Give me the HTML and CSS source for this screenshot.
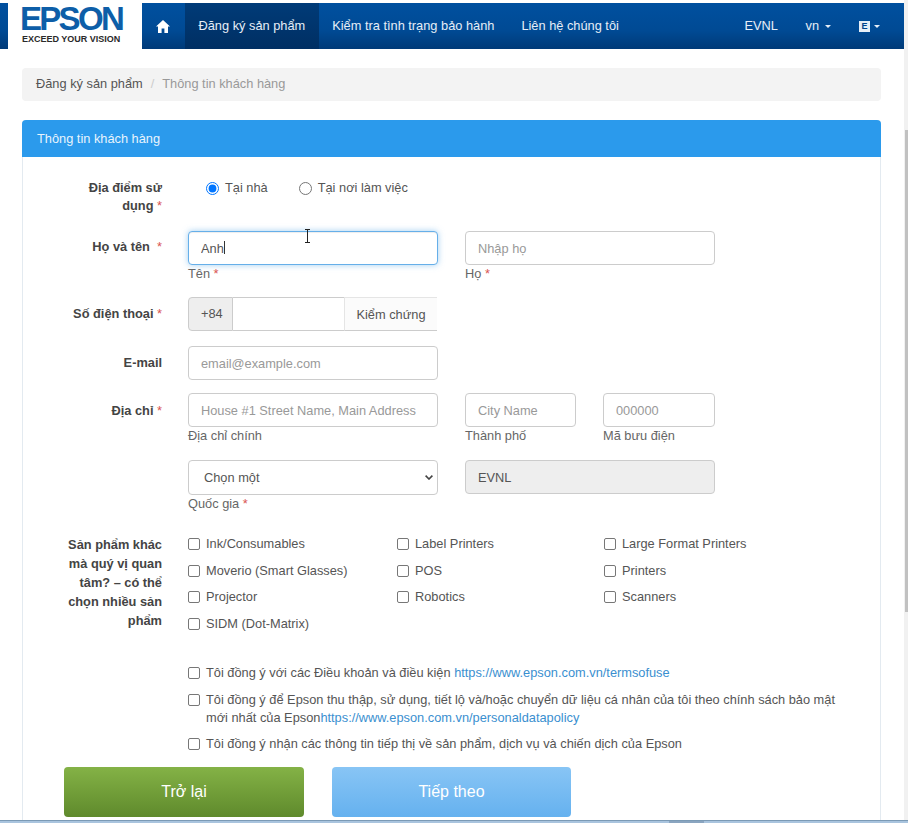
FILE: index.html
```html
<!DOCTYPE html>
<html lang="en">
<head>
    <meta charset="UTF-8">
    <meta name="viewport" content="width=device-width, initial-scale=1.0">
    <title>Thông tin khách hàng</title>
    <link rel="stylesheet" href="styles.css">
</head>
<body>
    <div class="page">
        <nav class="navbar">
            <a class="brand" href="#">
                <span class="brand-name">EPSON</span>
                <span class="brand-tag">EXCEED YOUR VISION</span>
            </a>
            <a class="nav-item nav-home" href="#">
                <svg width="14" height="13" viewBox="0 0 14 13"><path fill="#fff" d="M7 0 0 6.6h2V13h3.6V8.4h2.8V13H12V6.6h2z"/></svg>
            </a>
            <a class="nav-item active" href="#">Đăng ký sản phẩm</a>
            <a class="nav-item" href="#">Kiểm tra tình trạng bảo hành</a>
            <a class="nav-item" href="#">Liên hệ chúng tôi</a>
            <a class="nav-item nav-right" href="#">EVNL</a>
            <a class="nav-item nav-lang" href="#">vn <span class="caret"></span></a>
            <a class="nav-item nav-user" href="#">
                <span class="user-box">E</span><span class="caret"></span>
            </a>
        </nav>

        <div class="content">
            <ol class="breadcrumb">
                <li><a href="#">Đăng ký sản phẩm</a></li>
                <li class="sep">/</li>
                <li class="current">Thông tin khách hàng</li>
            </ol>

            <section class="panel">
                <h2 class="panel-heading">Thông tin khách hàng</h2>
                <form class="panel-body">
                    <div class="row row-place">
                        <label class="row-label">Địa điểm sử dụng <span class="req">*</span></label>
                        <div class="radios">
                            <label class="radio"><input type="radio" name="place" checked> Tại nhà</label>
                            <label class="radio"><input type="radio" name="place"> Tại nơi làm việc</label>
                        </div>
                    </div>

                    <div class="row row-name">
                        <label class="row-label">Họ và tên &nbsp;<span class="req">*</span></label>
                        <div class="field w-250">
                            <input class="input focused" type="text" value="Anh">
                            <small>Tên <span class="req">*</span></small>
                        </div>
                        <div class="field w-250">
                            <input class="input" type="text" placeholder="Nhập họ">
                            <small>Họ <span class="req">*</span></small>
                        </div>
                    </div>

                    <div class="row row-phone">
                        <label class="row-label">Số điện thoại <span class="req">*</span></label>
                        <div class="input-group">
                            <span class="addon">+84</span>
                            <input class="group-input" type="text">
                            <button class="verify" type="button">Kiểm chứng</button>
                        </div>
                    </div>

                    <div class="row row-email">
                        <label class="row-label">E-mail</label>
                        <div class="field w-250">
                            <input class="input" type="text" placeholder="email@example.com">
                        </div>
                    </div>

                    <div class="row row-address">
                        <label class="row-label">Địa chỉ <span class="req">*</span></label>
                        <div class="field w-250">
                            <input class="input" type="text" placeholder="House #1 Street Name, Main Address">
                            <small>Địa chỉ chính</small>
                        </div>
                        <div class="field w-111">
                            <input class="input" type="text" placeholder="City Name">
                            <small>Thành phố</small>
                        </div>
                        <div class="field w-112">
                            <input class="input" type="text" placeholder="000000">
                            <small>Mã bưu điện</small>
                        </div>
                    </div>

                    <div class="row row-country">
                        <span class="row-label"></span>
                        <div class="field w-250">
                            <div class="select-wrap">
                                <select class="input select">
                                    <option>Chọn một</option>
                                </select>
                                <svg class="select-arrow" width="8" height="5" viewBox="0 0 8 5"><path fill="none" stroke="#444" stroke-width="1.6" d="M.6.6 4 4 7.4.6"/></svg>
                            </div>
                            <small>Quốc gia <span class="req">*</span></small>
                        </div>
                        <div class="field w-250">
                            <input class="input" type="text" value="EVNL" disabled>
                        </div>
                    </div>

                    <div class="row row-products">
                        <label class="row-label">Sản phẩm khác mà quý vị quan tâm? – có thể chọn nhiều sản phẩm</label>
                        <div class="products">
                            <label class="check"><input type="checkbox"> Ink/Consumables</label>
                            <label class="check"><input type="checkbox"> Label Printers</label>
                            <label class="check"><input type="checkbox"> Large Format Printers</label>
                            <label class="check"><input type="checkbox"> Moverio (Smart Glasses)</label>
                            <label class="check"><input type="checkbox"> POS</label>
                            <label class="check"><input type="checkbox"> Printers</label>
                            <label class="check"><input type="checkbox"> Projector</label>
                            <label class="check"><input type="checkbox"> Robotics</label>
                            <label class="check"><input type="checkbox"> Scanners</label>
                            <label class="check"><input type="checkbox"> SIDM (Dot-Matrix)</label>
                        </div>
                    </div>

                    <div class="agreements">
                        <label class="agree"><input type="checkbox"><span>Tôi đồng ý với các Điều khoản và điều kiện <a href="#">https://www.epson.com.vn/termsofuse</a></span></label>
                        <label class="agree"><input type="checkbox"><span>Tôi đồng ý để Epson thu thập, sử dụng, tiết lộ và/hoặc chuyển dữ liệu cá nhân của tôi theo chính sách bảo mật mới nhất của Epson<a href="#">https://www.epson.com.vn/personaldatapolicy</a></span></label>
                        <label class="agree"><input type="checkbox"><span>Tôi đồng ý nhận các thông tin tiếp thị về sản phẩm, dịch vụ và chiến dịch của Epson</span></label>
                    </div>

                    <div class="actions">
                        <button class="btn btn-back" type="button">Trở lại</button>
                        <button class="btn btn-next" type="button">Tiếp theo</button>
                    </div>
                </form>
            </section>
        </div>

        <div class="scrollbar"><div class="scroll-thumb"></div></div>
        <div class="bottom-strip"><div class="strip-thumb"></div></div>
        <span class="text-caret"></span>
        <span class="ibeam"></span>
    </div>
</body>
</html>
```

FILE: styles.css
```css
* {
    box-sizing: border-box;
}

html, body {
    margin: 0;
    padding: 0;
    height: 100%;
    overflow: hidden;
}

body {
    font-family: "Liberation Sans", Arial, sans-serif;
    font-size: 12.8px;
    line-height: 18px;
    color: #555;
    background-color: #fff;
}

a {
    text-decoration: none;
}

.page {
    position: relative;
    width: 908px;
    height: 823px;
    padding-top: 3px;
    overflow: hidden;
}

/* top bar */
.navbar {
    display: flex;
    align-items: stretch;
    width: 904px;
    height: 46px;
    padding-left: 8px;
    background: linear-gradient(to bottom, #00509f 0%, #004a94 60%, #003a78 100%);
}

.brand {
    display: flex;
    flex-direction: column;
    flex: none;
    width: 134px;
    padding: 0 0 0 14px;
    background-color: #fff;
}

.brand-name {
    font-size: 33px;
    line-height: 26px;
    font-weight: bold;
    letter-spacing: -2.7px;
    color: #0d5ea8;
    margin: 3px 0 0 -2px;
}

.brand-tag {
    font-size: 9px;
    line-height: 10px;
    font-weight: bold;
    color: #2a2a2a;
    margin-top: 2px;
    white-space: nowrap;
}

.nav-item {
    display: flex;
    align-items: center;
    padding: 0 13.5px;
    color: #e6eef7;
    white-space: nowrap;
}

.nav-home {
    width: 43px;
    padding: 0 0 0 14px;
}

.active {
    background: linear-gradient(to bottom, #003b78, #002f63);
}

.nav-right {
    margin-left: auto;
}

.nav-lang {
    gap: 4px;
    padding: 0 14px;
}

.nav-user {
    padding: 0 24px 0 14px;
}

.nav-user .caret {
    margin-left: 4px;
}

.user-box {
    display: block;
    width: 11px;
    height: 11px;
    background-color: #e6eef7;
    color: #00448c;
    font-size: 9px;
    line-height: 11px;
    font-weight: bold;
    text-align: center;
}

.caret {
    display: inline-block;
    margin-left: 2px;
    border-top: 3px solid #e6eef7;
    border-left: 3px solid transparent;
    border-right: 3px solid transparent;
}

/* main area */
.content {
    width: 904px;
    padding: 19px 23px 0 22px;
}

.breadcrumb {
    display: flex;
    gap: 8px;
    margin: 0 0 19px;
    height: 33px;
    padding: 7px 14px;
    list-style: none;
    background-color: #f3f3f3;
    border-radius: 4px;
}

.breadcrumb a {
    color: #555;
}

.sep {
    color: #ccc;
}

.current {
    color: #999;
}

.panel {
    border: 1px solid #e3eaf0;
    border-top: 0;
    border-radius: 4px 4px 0 0;
    height: 720px;
}

.panel-heading {
    margin: 0 -1px;
    height: 37px;
    padding: 10px 15px;
    font-size: 12.8px;
    font-weight: normal;
    line-height: 18px;
    color: #e8f4fd;
    background-color: #2b9aec;
    border-radius: 4px 4px 0 0;
}

.panel-body {
    padding: 22px 0 0;
}

.row {
    display: flex;
    align-items: flex-start;
}

.row-label {
    flex: none;
    width: 139px;
    margin-right: 26px;
    padding-left: 35px;
    text-align: right;
    font-weight: bold;
    color: #444;
}

.req {
    color: #d9534f;
    font-weight: normal;
}

.row-place {
    height: 52px;
}

.row-place .row-label {
    padding-left: 49px;
}

.radios {
    display: flex;
    gap: 31px;
}

.radio {
    display: flex;
    align-items: center;
    gap: 6px;
    height: 18px;
}

.radio input {
    width: 13px;
    height: 13px;
    margin: 0 0 0 18px;
}

.radio + .radio input {
    margin-left: 0;
}

.row-name .row-label {
    padding-top: 7px;
}

.row-phone .row-label,
.row-email .row-label {
    padding-top: 8px;
}

.row-address .row-label {
    padding-top: 9px;
}

.row-name {
    height: 66px;
}

.row-phone {
    height: 49px;
}

.row-email {
    height: 47px;
}

.row-address {
    height: 67px;
}

.row-country {
    height: 75px;
}

.row-products {
    height: 129px;
}

.row-products .row-label {
    line-height: 19px;
}

.field {
    flex: none;
    margin-right: 27px;
}

.w-250 {
    width: 250px;
}

.w-111 {
    width: 111px;
}

.w-112 {
    width: 112px;
}

.field small {
    display: block;
    font-size: 12.8px;
    line-height: 18px;
    color: #666;
}

.input {
    display: block;
    width: 100%;
    height: 34px;
    padding: 6px 12px;
    font-family: inherit;
    font-size: 12.8px;
    color: #555;
    background-color: #fff;
    border: 1px solid #ccc;
    border-radius: 4px;
    outline: none;
}

.input::placeholder {
    color: #999;
}

.input:disabled {
    background-color: #eee;
}

.focused {
    border-color: #66afe9;
    box-shadow: inset 0 1px 1px rgba(0, 0, 0, .075), 0 0 6px rgba(102, 175, 233, .6);
}

.select-wrap {
    position: relative;
}

.select {
    appearance: none;
    height: 35px;
    padding-left: 15px;
}

.select-arrow {
    position: absolute;
    top: 15px;
    right: 5px;
}

.input-group {
    display: flex;
    width: 249px;
    height: 34px;
}

.addon {
    flex: none;
    width: 45px;
    padding: 7px 12px;
    background-color: #eee;
    border: 1px solid #ccc;
    border-radius: 4px 0 0 4px;
}

.group-input {
    flex: 1;
    min-width: 0;
    border: 1px solid #ccc;
    border-left: 0;
    border-right: 0;
    outline: none;
}

.verify {
    flex: none;
    width: 93px;
    padding: 0;
    font-family: inherit;
    font-size: 12.8px;
    color: #555;
    background-color: #fbfbfb;
    border: 1px solid #e5e5e5;
    border-bottom-color: #ccc;
    border-right: 0;
}

.products {
    display: grid;
    grid-template-columns: 209px 207px auto;
    grid-auto-rows: 26.5px;
    flex: 1;
}

.check {
    display: flex;
    align-items: flex-start;
    gap: 6px;
}

.check input,
.agree input {
    appearance: none;
    flex: none;
    width: 12px;
    height: 12px;
    margin: 3px 0 0;
    background-color: #fff;
    border: 1px solid #777;
    border-radius: 2px;
}

.agreements {
    padding-left: 165px;
    padding-right: 30px;
}

.agree {
    display: flex;
    gap: 6px;
    margin-bottom: 8.5px;
}

.agree a {
    color: #3a8fd0;
}

.actions {
    display: flex;
    gap: 28px;
    margin: 14px 0 0 41px;
}

.btn {
    width: 240px;
    height: 50px;
    padding: 0;
    font-family: inherit;
    font-size: 16px;
    font-weight: normal;
    color: #fff;
    border: 0;
    border-radius: 4px;
}

.btn-back {
    background: linear-gradient(to bottom, #84b246, #5f8a2c);
}

.btn-next {
    width: 239px;
    background: linear-gradient(to bottom, #88c5f5, #65b1ef);
}

/* browser chrome captured at the edges of the shot */
.scrollbar {
    position: absolute;
    top: 0;
    right: 0;
    bottom: 0;
    width: 4px;
    background-color: #f1f1f1;
}

.scroll-thumb {
    position: absolute;
    top: 130px;
    left: 1px;
    right: 0;
    height: 482px;
    background-color: #c1c1c1;
}

.bottom-strip {
    position: absolute;
    left: 0;
    right: 0;
    bottom: 0;
    height: 3px;
    background-color: #a9c4de;
    border-top: 1px solid #7b9ab5;
}

.strip-thumb {
    position: absolute;
    left: 669px;
    top: 0;
    width: 35px;
    height: 2px;
    background-color: #8aa5c0;
}

/* text caret in the name field */
.text-caret {
    position: absolute;
    left: 224px;
    top: 241px;
    width: 1px;
    height: 13px;
    background-color: #333;
}

/* mouse cursor over the name field */
.ibeam {
    position: absolute;
    left: 307px;
    top: 229px;
    width: 1px;
    height: 14px;
    background-color: #222;
}

.ibeam::before,
.ibeam::after {
    content: "";
    position: absolute;
    left: -2px;
    width: 5px;
    height: 1px;
    background-color: #222;
}

.ibeam::before {
    top: 0;
}

.ibeam::after {
    bottom: 0;
}
```
